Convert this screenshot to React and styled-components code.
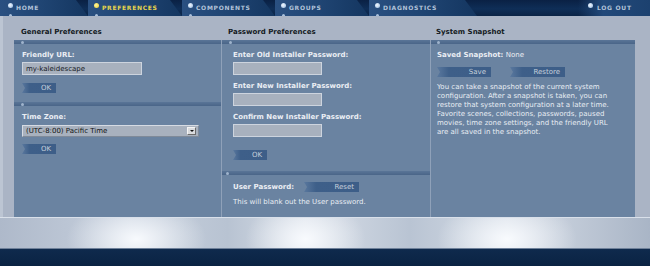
import React from "react";
import styled, { createGlobalStyle } from "styled-components";

const Global = createGlobalStyle`
  html, body { margin: 0; padding: 0; background: #aab4c5; }
  body {
    width: 650px; height: 266px; overflow: hidden;
    font-family: "DejaVu Sans", Verdana, sans-serif;
  }
  * { box-sizing: border-box; }
`;

const Page = styled.div`
  width: 650px;
  height: 266px;
  display: flex;
  flex-direction: column;
  overflow: hidden;
`;

/* ---------- navigation ---------- */
const Nav = styled.nav`
  height: 16px;
  flex: none;
  display: flex;
  align-items: stretch;
  background: linear-gradient(180deg, #0a2144 0%, #0f2e57 55%, #0a2346 100%);
`;

const Tab = styled.div`
  position: relative;
  width: ${(p) => p.$w}px;
  padding-left: ${(p) => p.$pl}px;
  display: flex;
  align-items: center;
  gap: 3px;
  background: linear-gradient(90deg, #2a5081 0%, #1f4472 50%, #143660 100%);
  clip-path: polygon(0 0, calc(100% - 12px) 0, 100% 100%, 0 100%);
  &::after {
    content: "";
    position: absolute;
    left: ${(p) => p.$pl + 1}px;
    bottom: 0;
    width: 3px;
    height: 2px;
    border-radius: 2px 2px 0 0;
    background: #a9c0dc;
  }
`;

const Spacer = styled.div`
  flex: 1;
`;

const LogoutTab = styled.div`
  width: 72px;
  padding-left: 10px;
  display: flex;
  align-items: center;
  gap: 4px;
  background: linear-gradient(90deg, rgba(35, 74, 120, 0) 0%, #22497a 35%, #1c416f 100%);
`;

const Bullet = styled.span`
  flex: none;
  align-self: flex-start;
  margin-top: 3px;
  width: 5px;
  height: 5px;
  border-radius: 50%;
  background: ${(p) =>
    p.$active
      ? "radial-gradient(circle at 40% 40%, #fff6a0, #e8cc2c)"
      : "radial-gradient(circle at 40% 40%, #f2f8ff, #94b8e0)"};
`;

const TabLabel = styled.span`
  font-size: 6px;
  font-weight: bold;
  letter-spacing: 0.7px;
  line-height: 16px;
  white-space: nowrap;
  color: ${(p) => (p.$active ? "#e8d64c" : "#b3c4da")};
`;

/* ---------- main area ---------- */
const Main = styled.main`
  flex: none;
  height: 201px;
  padding: 0 15px 0 11px;
  display: grid;
  grid-template-columns: 207px 209px 205px;
  background: #aab4c5;
  border-left: 3px solid #bcc5d3;
`;

const Column = styled.section`
  display: flex;
  flex-direction: column;
`;

const Heading = styled.h2`
  margin: 0;
  height: 24px;
  padding: 0 0 3px ${(p) => p.$pl}px;
  display: flex;
  align-items: flex-end;
  font-size: 7px;
  line-height: 9px;
  font-weight: bold;
  color: #141a22;
  white-space: nowrap;
`;

const Panel = styled.div`
  flex: 1;
  display: flex;
  flex-direction: column;
  background: #6a83a1;
  border-left: ${(p) => (p.$divider ? "1px solid #8fa1b9" : "none")};
`;

const Strip = styled.div`
  position: relative;
  height: 4px;
  flex: none;
  background: linear-gradient(180deg, #5a7597 0%, #4a6588 100%);
  &::after {
    content: "";
    position: absolute;
    left: ${(p) => p.$dot}px;
    top: 1px;
    width: 3px;
    height: 3px;
    border-radius: 50%;
    background: #9fb3cc;
  }
`;

const Section = styled.div`
  display: flex;
  flex-direction: column;
  align-items: flex-start;
  padding: 7px 0 ${(p) => p.$pb || 0}px ${(p) => p.$pl}px;
`;

const Label = styled.div`
  font-size: 7px;
  line-height: 9px;
  font-weight: bold;
  color: #eaeef4;
  white-space: nowrap;
  margin-top: ${(p) => p.$mt || 0}px;
  span {
    font-weight: normal;
  }
`;

const TextInput = styled.input`
  display: block;
  width: ${(p) => p.$w}px;
  height: 13px;
  margin: ${(p) => p.$mt || 2}px 0 0 0;
  padding: 0 0 0 3px;
  border: 1px solid #cdd4de;
  background: #a8b1be;
  font-family: "DejaVu Sans", Verdana, sans-serif;
  font-size: 7px;
  color: #16191e;
  outline: none;
`;

const SelectBox = styled.div`
  width: ${(p) => p.$w}px;
  height: 12px;
  margin-top: 3px;
  display: flex;
  align-items: center;
  justify-content: space-between;
  padding: 0 2px 0 3px;
  border: 1px solid #d6dbe3;
  border-right-color: #7f8a99;
  border-bottom-color: #7f8a99;
  background: #a8b1be;
  font-size: 7px;
  color: #111;
  white-space: nowrap;
`;

const DropButton = styled.span`
  width: 9px;
  height: 8px;
  display: flex;
  align-items: center;
  justify-content: center;
  background: #d9dbde;
  border: 1px solid #f4f4f4;
  border-right-color: #6b6b6b;
  border-bottom-color: #6b6b6b;
  &::before {
    content: "";
    border-left: 2px solid transparent;
    border-right: 2px solid transparent;
    border-top: 2px solid #111;
  }
`;

const Button = styled.button`
  display: block;
  width: ${(p) => p.$w}px;
  height: 10px;
  margin: ${(p) => p.$mt || 0}px 0 0 0;
  padding: 0 5px 0 0;
  border: none;
  text-align: right;
  font-family: "DejaVu Sans", Verdana, sans-serif;
  font-size: 7px;
  line-height: 10px;
  color: #c5cfdb;
  background: linear-gradient(90deg, #5a789e 0%, #3e5f89 22%, #3d5e88 100%);
  clip-path: polygon(0 0, 100% 0, 100% 100%, 0 100%, 3px 50%);
`;

const Row = styled.div`
  display: flex;
  align-items: center;
  gap: ${(p) => p.$gap}px;
  margin-top: ${(p) => p.$mt || 0}px;
`;

const Text = styled.p`
  margin: ${(p) => p.$mt || 0}px 0 0 0;
  font-size: 7px;
  line-height: 9px;
  color: #e8edf3;
  white-space: nowrap;
`;

/* ---------- footer ---------- */
const Shine = styled.div`
  flex: none;
  height: 31px;
  border-top: 1px solid #d9e0ea;
  background:
    radial-gradient(ellipse 70px 40px at 21% 70%, rgba(250, 252, 255, 0.95), rgba(250, 252, 255, 0) 100%),
    radial-gradient(ellipse 60px 40px at 47% 70%, rgba(250, 252, 255, 0.95), rgba(250, 252, 255, 0) 100%),
    radial-gradient(ellipse 70px 40px at 78% 70%, rgba(250, 252, 255, 0.95), rgba(250, 252, 255, 0) 100%),
    linear-gradient(90deg, #aeb9ca 0%, #c8d1de 20%, #b8c3d2 35%, #d9dfe8 47%, #b9c4d3 63%, #d5dce6 78%, #a9b5c6 100%);
`;

const Bottom = styled.footer`
  flex: 1;
  border-top: 1px solid #6e8099;
  background: linear-gradient(180deg, #0f2a4d 0%, #0a2343 100%);
`;

export default function App() {
  return (
    <Page>
      <Global />
      <Nav>
        <Tab $w={88} $pl={8}>
          <Bullet />
          <TabLabel>HOME</TabLabel>
        </Tab>
        <Tab $w={94} $pl={6}>
          <Bullet $active />
          <TabLabel $active>PREFERENCES</TabLabel>
        </Tab>
        <Tab $w={93} $pl={6}>
          <Bullet />
          <TabLabel>COMPONENTS</TabLabel>
        </Tab>
        <Tab $w={94} $pl={6}>
          <Bullet />
          <TabLabel>GROUPS</TabLabel>
        </Tab>
        <Tab $w={108} $pl={6}>
          <Bullet />
          <TabLabel>DIAGNOSTICS</TabLabel>
        </Tab>
        <Spacer />
        <LogoutTab>
          <Bullet />
          <TabLabel>LOG OUT</TabLabel>
        </LogoutTab>
      </Nav>

      <Main>
        <Column>
          <Heading $pl={7}>General Preferences</Heading>
          <Panel>
            <Strip $dot={7} />
            <Section $pl={8} $pb={9}>
              <Label>Friendly URL:</Label>
              <TextInput $w={120} defaultValue="my-kaleidescape" readOnly />
              <Button $w={34} $mt={8}>OK</Button>
            </Section>
            <Strip $dot={7} />
            <Section $pl={8}>
              <Label>Time Zone:</Label>
              <SelectBox $w={177}>
                (UTC-8:00) Pacific Time
                <DropButton />
              </SelectBox>
              <Button $w={34} $mt={7}>OK</Button>
            </Section>
          </Panel>
        </Column>

        <Column>
          <Heading $pl={7}>Password Preferences</Heading>
          <Panel $divider>
            <Strip $dot={7} />
            <Section $pl={11} $pb={11}>
              <Label>Enter Old Installer Password:</Label>
              <TextInput $w={89} type="password" readOnly />
              <Label $mt={7}>Enter New Installer Password:</Label>
              <TextInput $w={89} type="password" readOnly />
              <Label $mt={7}>Confirm New Installer Password:</Label>
              <TextInput $w={89} type="password" readOnly />
              <Button $w={34} $mt={13}>OK</Button>
            </Section>
            <Strip $dot={4} />
            <Section $pl={11}>
              <Row $gap={10}>
                <Label>User Password:</Label>
                <Button $w={55}>Reset</Button>
              </Row>
              <Text $mt={6}>This will blank out the User password.</Text>
            </Section>
          </Panel>
        </Column>

        <Column>
          <Heading $pl={6}>System Snapshot</Heading>
          <Panel $divider>
            <Strip $dot={6} />
            <Section $pl={6}>
              <Label>
                Saved Snapshot: <span>None</span>
              </Label>
              <Row $gap={19} $mt={7}>
                <Button $w={54}>Save</Button>
                <Button $w={55}>Restore</Button>
              </Row>
              <Text $mt={6}>
                You can take a snapshot of the current system
                <br />
                configuration. After a snapshot is taken, you can
                <br />
                restore that system configuration at a later time.
                <br />
                Favorite scenes, collections, passwords, paused
                <br />
                movies, time zone settings, and the friendly URL
                <br />
                are all saved in the snapshot.
              </Text>
            </Section>
          </Panel>
        </Column>
      </Main>

      <Shine />
      <Bottom />
    </Page>
  );
}
